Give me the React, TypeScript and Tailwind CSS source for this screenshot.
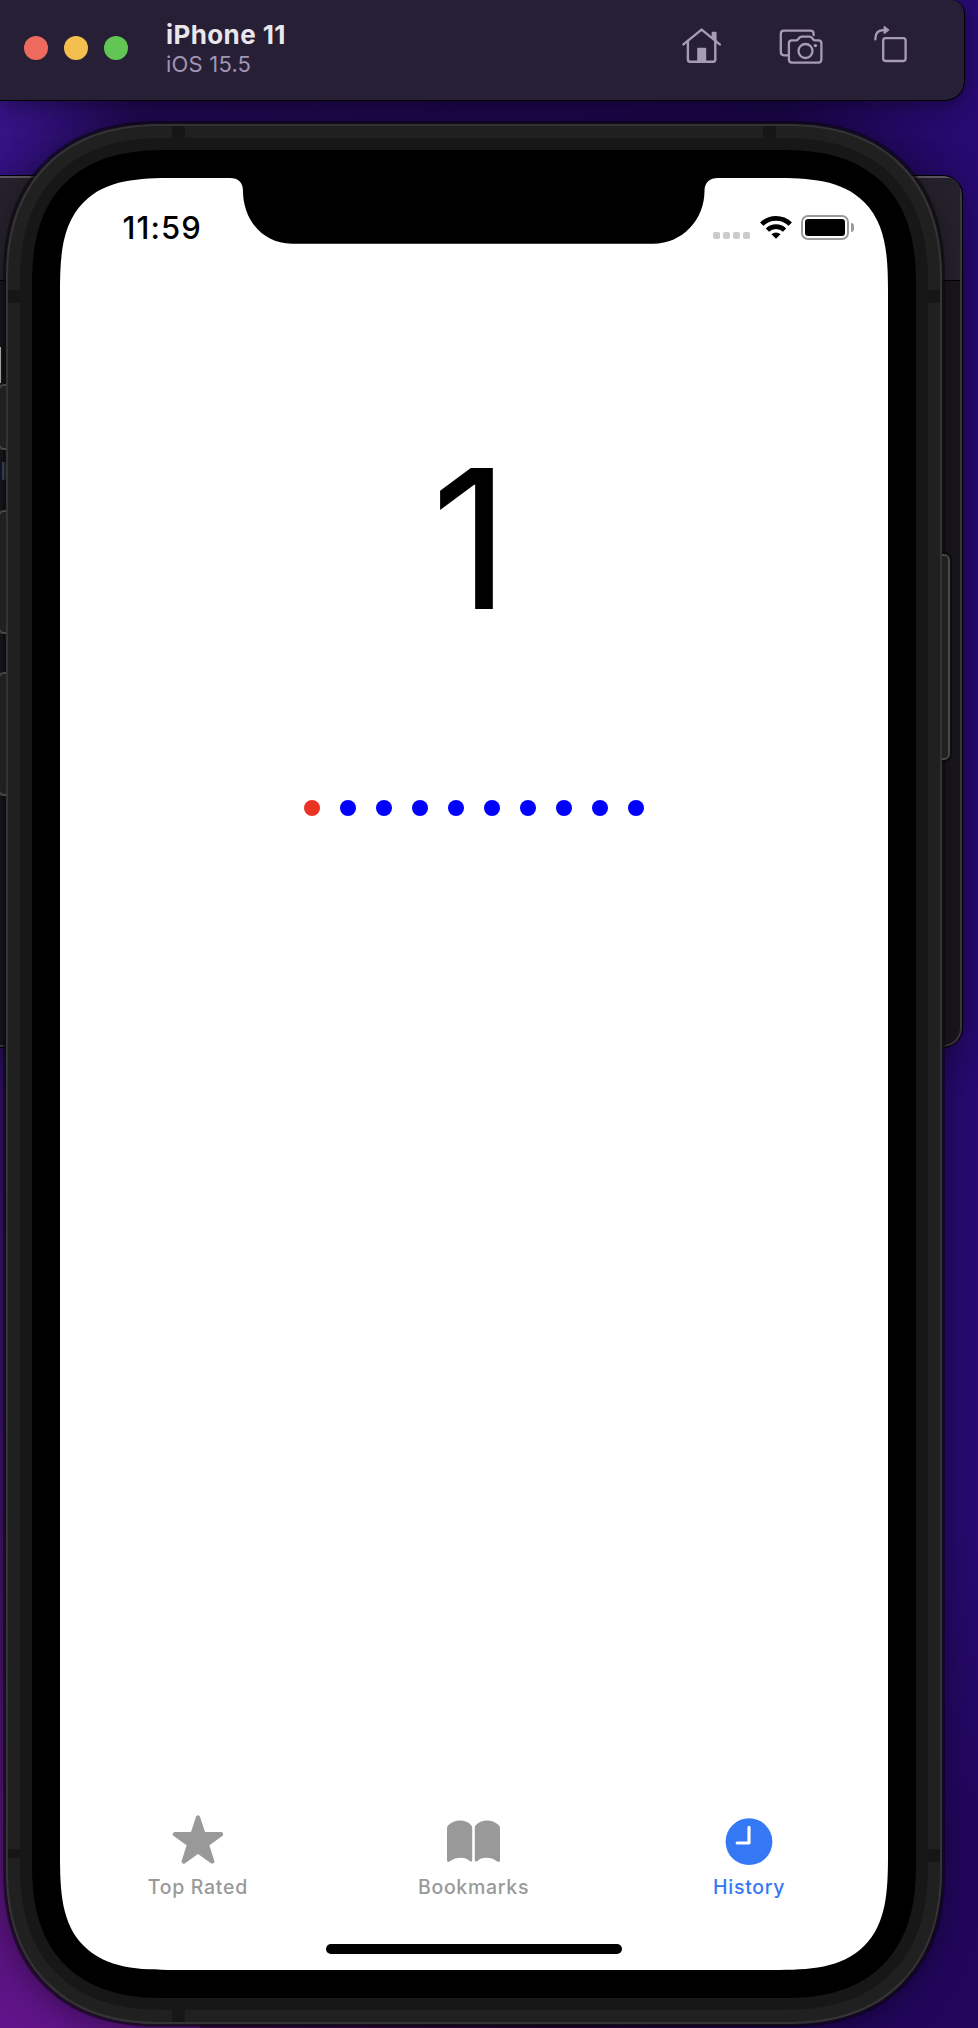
import type { ReactNode } from "react";

const DOTS = Array.from({ length: 10 }, (_, i) => i);

function HomeIcon() {
  return (
    <svg width="40" height="38" viewBox="0 0 40 38" fill="none" stroke="#a79cb8" strokeWidth="2.4" strokeLinecap="round" strokeLinejoin="round">
      <path d="M2.4 17.4 20.6 2.6 38.8 17.4" />
      <path d="M6.9 14v18.6q0 2.2 2.2 2.2h23q2.2 0 2.2-2.2V14" />
      <path d="M31.8 6h2.6v7.2L31.8 11Z" fill="#a79cb8" />
      <path d="M17.4 22h6.6v12.6h-6.6Z" fill="#a79cb8" />
    </svg>
  );
}

function CameraIcon() {
  return (
    <svg width="44" height="36" viewBox="0 0 44 36" fill="none" stroke="#a79cb8" strokeWidth="2.3" strokeLinecap="round" strokeLinejoin="round">
      <path d="M8.6 26.3H5q-3.2 0-3.2-3.2V4.8q0-3.2 3.2-3.2h26.4q3.2 0 3.2 3.2v1.4" />
      <path d="M12.9 11.4h4.3q1 0 1.7-.9l1.4-1.7q1-1.2 2.5-1.2h7.6q1.5 0 2.5 1.2l1.4 1.7q.7.9 1.7.9h3.4q3 0 3 3v16.2q0 3-3 3H12.9q-3 0-3-3V14.4q0-3 3-3Z" />
      <circle cx="26.5" cy="22" r="7" />
      <circle cx="36.4" cy="16.6" r="1.7" fill="#a79cb8" stroke="none" />
    </svg>
  );
}

function RotateIcon() {
  return (
    <svg width="34" height="38" viewBox="0 0 34 38" fill="none" stroke="#a79cb8" strokeWidth="2.3" strokeLinecap="round" strokeLinejoin="round">
      <rect x="9.2" y="13.2" width="22.4" height="22.8" rx="2.4" />
      <path d="M1.4 14.4v-1.2Q1.7 5.3 9.6 5.2h2" />
      <path d="M10.2 1.6 14.7 5 10.2 8.4Z" fill="#a79cb8" strokeWidth="1.2" />
    </svg>
  );
}

function Toolbar() {
  return (
    <header className="absolute left-0 top-0 flex h-[101px] w-[965px] items-start rounded-br-[20px] rounded-tr-[14px] border-b border-r border-black bg-[#271f36] shadow-[0_4px_20px_rgba(0,0,0,0.35)]">
      <div className="flex gap-4 pl-6 pt-9">
        <span className="size-6 rounded-full bg-[#ee6a5f]" />
        <span className="size-6 rounded-full bg-[#f5bf4f]" />
        <span className="size-6 rounded-full bg-[#62c655]" />
      </div>
      <div className="flex flex-col pl-[38px] pt-[18px]">
        <span className="text-[26px] font-bold leading-[33px] tracking-[0.4px] text-[#e9e7ec]">iPhone 11</span>
        <span className="text-[22px] leading-[26px] tracking-[0.2px] text-[#a095b3]">iOS 15.5</span>
      </div>
      <div className="ml-auto flex pr-[56px]">
        <div className="mr-[58px] pt-[27px]"><HomeIcon /></div>
        <div className="mr-[51px] pt-[29px]"><CameraIcon /></div>
        <div className="pt-[25px]"><RotateIcon /></div>
      </div>
    </header>
  );
}

function BackWindow() {
  return (
    <div className="absolute left-[-40px] top-[175px] flex h-[873px] w-[1003px] flex-col overflow-hidden rounded-[20px] border border-black bg-[#19161d] shadow-[0_8px_40px_rgba(0,0,0,0.3)]">
      <div className="flex h-full flex-col rounded-[19px] border-2 border-[#3d3a42] border-t-[#5a575f]">
        <div className="h-[103px] shrink-0 border-b border-black bg-[#26222d]" />
        <div className="mt-[66px] h-9 w-[38px] border-r border-[#bdbdbf]" />
        <div className="mt-[69px] pl-[38px] text-[24px] font-bold leading-[30px] text-[#77757e]">p</div>
      </div>
    </div>
  );
}

function Wifi() {
  return (
    <svg width="32" height="24" viewBox="0 0 32 24" fill="none" stroke="#000" strokeWidth="4.7">
      <path d="M1.7 9.1a20.6 20.6 0 0 1 28.6 0" />
      <path d="M7.4 15.1a12.5 12.5 0 0 1 17.2 0" />
      <path d="M16 23.8 11.5 19.3a6.4 6.4 0 0 1 9 0Z" fill="#000" stroke="none" />
    </svg>
  );
}

function Notch() {
  return (
    <svg className="absolute left-[170px] top-[-1px]" width="488" height="67" viewBox="0 0 488 67">
      <path d="M0 0V1C8 1 13 5 13 14C13 42 32 66.7 62 66.7H423C453 66.7 474.5 42 474.5 14C474.5 5 480 1 488 1V0Z" fill="#000" />
    </svg>
  );
}

function StatusBar() {
  return (
    <div className="flex h-[90px] shrink-0 items-start justify-between pl-[62.5px] pr-[34px]">
      <span className="pt-[30px] text-[31px] font-[550] leading-10 tracking-[1.1px] text-black">11:59</span>
      <div className="flex items-start pt-[37px]">
        <div className="flex gap-[3px] pt-[17px]">
          {[0, 1, 2, 3].map((i) => (
            <span key={i} className="size-[7px] rounded-[2px] bg-[#cbcbcb]" />
          ))}
        </div>
        <div className="ml-[10px]"><Wifi /></div>
        <div className="ml-[9px] h-[25px] w-12 rounded-[7px] border-2 border-[#9b9b9b] p-[2px]">
          <div className="h-full rounded-[3px] bg-black" />
        </div>
        <div className="ml-[2px] mt-2 h-[9px] w-[3px] rounded-r-full bg-[#9b9b9b]" />
      </div>
    </div>
  );
}

function Tab({ label, active, children }: { label: string; active?: boolean; children: ReactNode }) {
  return (
    <div className={active ? "flex flex-1 flex-col items-center text-[#3478f6]" : "flex flex-1 flex-col items-center text-[#999999]"}>
      <div className="flex h-[52px] items-start">{children}</div>
      <span className="mt-[9px] text-[19.5px] font-[450] leading-6 tracking-[0.7px]">{label}</span>
    </div>
  );
}

function TabBar() {
  return (
    <nav className="mt-auto flex h-[130px] shrink-0 pr-px">
      <Tab label="Top Rated">
        <svg width="52" height="50" viewBox="0 0 52 50" fill="currentColor" stroke="currentColor" strokeWidth="4.4" strokeLinejoin="round">
          <path d="M26 3.6 31.4 20.2H49L34.8 30.4 40.2 47.4 26 37.2 11.8 47.4 17.2 30.4 3 20.2H20.6Z" />
        </svg>
      </Tab>
      <Tab label="Bookmarks">
        <svg width="53" height="50" viewBox="0 0 53 50" fill="currentColor">
          <path d="M0 14Q0 12.4 1.2 11.2Q6 6.4 13 6.4T24 11Q25.2 12.2 25.2 13.8V46Q25.2 48.4 23 47.2Q19.4 43.8 13.6 43.8T3 47.2Q0 49 0 46Z" />
          <path d="M53 14Q53 12.4 51.8 11.2Q47 6.4 40 6.4T29 11Q27.8 12.2 27.8 13.8V46Q27.8 48.4 30 47.2Q33.6 43.8 39.4 43.8T50 47.2Q53 49 53 46Z" />
        </svg>
      </Tab>
      <Tab label="History" active>
        <svg width="48" height="52" viewBox="0 0 48 52">
          <circle cx="24" cy="27.7" r="23.4" fill="currentColor" />
          <path d="M24 13.4V29H12.2" fill="none" stroke="#fff" strokeWidth="3.2" strokeLinecap="round" strokeLinejoin="round" />
        </svg>
      </Tab>
    </nav>
  );
}

function Screen() {
  return (
    <main className="relative flex h-[1792px] w-[828px] flex-col overflow-hidden rounded-[115px] bg-white [corner-shape:superellipse(1.57)]">
      <Notch />
      <StatusBar />
      <div className="mt-[151px] flex h-[240px] items-center justify-center pr-[7px] text-[194px] leading-none text-black">1</div>
      <div className="mt-[141px] flex justify-center gap-5">
        {DOTS.map((i) => (
          <span key={i} className={i === 0 ? "size-4 rounded-full bg-[#eb3323]" : "size-4 rounded-full bg-[#0000ff]"} />
        ))}
      </div>
      <TabBar />
      <div className="mx-auto mb-4 h-[10px] w-[296px] shrink-0 rounded-full bg-black" />
    </main>
  );
}

function Phone() {
  return (
    <div className="absolute left-[6px] top-[124px]">
      <span className="absolute inset-0 rounded-[155px] shadow-[0_0_0_2px_rgba(20,15,24,0.6),0_0_0_3px_rgba(0,0,0,0.4),0_8px_36px_rgba(0,0,0,0.4)] [corner-shape:superellipse(1.2)]" />
      <span className="absolute left-[-8px] top-[260px] h-[66px] w-5 rounded-md border-2 border-[#484848] bg-[#202020]" />
      <span className="absolute left-[-8px] top-[386px] h-[124px] w-5 rounded-md border-2 border-[#484848] bg-[#202020]" />
      <span className="absolute left-[-8px] top-[548px] h-[124px] w-5 rounded-md border-2 border-[#484848] bg-[#202020]" />
      <span className="absolute right-[-8px] top-[430px] h-[206px] w-5 rounded-md border-2 border-[#484848] bg-[#202020] shadow-[0_0_0_2px_rgba(0,0,0,0.35)]" />
      <div className="relative rounded-[155px] border-2 border-[#343434] bg-[#202020] p-3 [corner-shape:superellipse(1.2)]">
        <span className="absolute left-[164px] top-0 h-3 w-[13px] bg-[#161616]" />
        <span className="absolute right-[164px] top-0 h-3 w-[13px] bg-[#161616]" />
        <span className="absolute bottom-0 left-[164px] h-3 w-[13px] bg-[#161616]" />
        <span className="absolute left-0 top-[164px] h-[13px] w-3 bg-[#161616]" />
        <span className="absolute right-0 top-[164px] h-[13px] w-3 bg-[#161616]" />
        <span className="absolute bottom-[164px] left-0 h-[9px] w-3 bg-[#161616]" />
        <span className="absolute bottom-[160px] right-0 h-[13px] w-3 bg-[#161616]" />
        <div className="rounded-[145px] bg-[#171717] p-3 [corner-shape:superellipse(1.25)]">
          <div className="rounded-[135px] bg-black p-7 [corner-shape:superellipse(1.3)]">
            <Screen />
          </div>
        </div>
      </div>
    </div>
  );
}

export default function App() {
  return (
    <div className="relative h-[2028px] w-[978px] overflow-hidden bg-[linear-gradient(90deg,#351385_0%,#200950_14%,#1a0748_80%,#280a72_100%)] font-['Inter',sans-serif]">
      <div className="absolute bottom-0 left-0 h-[1000px] w-[489px] bg-[linear-gradient(180deg,#2e0f6c_0%,#3e1268_50%,#501370_75%,#60148a_100%)]" />
      <div className="absolute bottom-0 right-0 h-[500px] w-[489px] bg-[linear-gradient(180deg,transparent_0%,#22065c_60%,#22065c_100%)]" />
      <div className="absolute bottom-0 left-[200px] h-[30px] w-[600px] bg-[linear-gradient(90deg,#4a0c5c_0%,#2a0640_60%,#22065c_100%)]" />
      <BackWindow />
      <Phone />
      <Toolbar />
    </div>
  );
}
